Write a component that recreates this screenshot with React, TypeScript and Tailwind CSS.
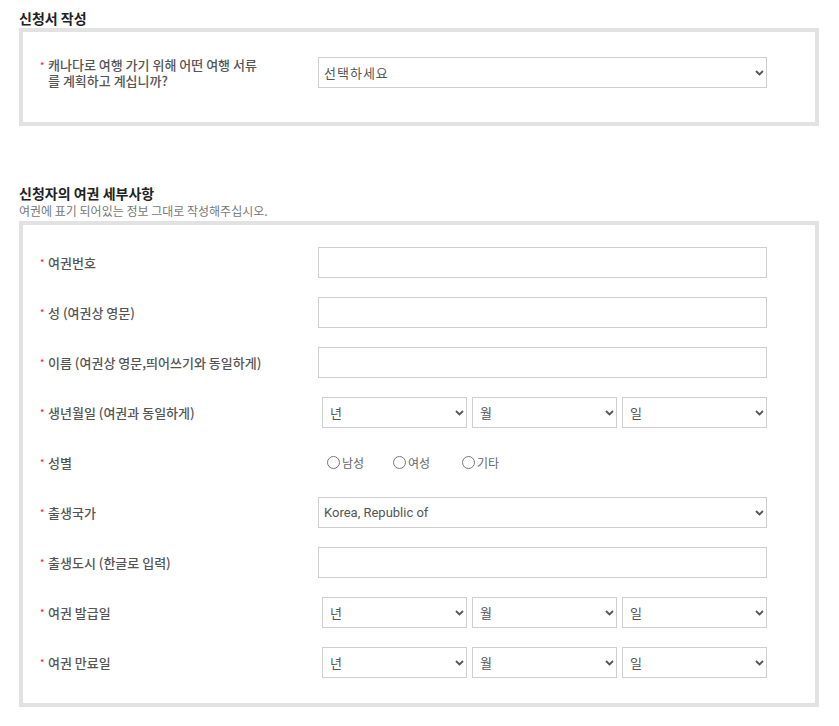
import React from "react";

const Chevron = () => (
  <svg width="9" height="6" viewBox="0 0 9 6" className="shrink-0">
    <path d="M1 1 L4.5 4.5 L8 1" fill="none" stroke="#555" strokeWidth="1.8" />
  </svg>
);

const Select = ({ text, className = "", pl = "pl-[5px]" }: { text: string; className?: string; pl?: string }) => (
  <div
    className={`h-[31px] border border-[#cfcfcf] bg-white flex items-center justify-between ${pl} pr-[2px] text-[13px] text-[#555] ${className}`}
  >
    <span>{text}</span>
    <Chevron />
  </div>
);

const Input = () => <div className="h-[31px] w-[449px] border border-[#cfcfcf] bg-white" />;

const Label = ({ children }: { children: React.ReactNode }) => (
  <div className="w-[295px] shrink-0 pl-[17px] flex items-center text-[13px] leading-[16px] text-[#555] font-medium">
    <span className="w-[8px] shrink-0 text-[#ff2a2a] text-[9px] self-start mt-[1px]">*</span>
    <span>{children}</span>
  </div>
);

const Row = ({ label, children }: { label: React.ReactNode; children: React.ReactNode }) => (
  <div className="flex items-center h-[31px]">
    <Label>{label}</Label>
    <div className="w-[449px] flex items-center">{children}</div>
  </div>
);

const DateSelects = () => (
  <div className="flex gap-[5px] ml-[4px]">
    <Select text="년" className="w-[145px]" pl="pl-[7px]" />
    <Select text="월" className="w-[145px]" pl="pl-[7px]" />
    <Select text="일" className="w-[145px]" pl="pl-[7px]" />
  </div>
);

const Radio = ({ text, className = "" }: { text: string; className?: string }) => (
  <div className={`flex items-center ${className}`}>
    <span className="w-[13px] h-[13px] rounded-full border border-[#777] bg-white" />
    <span className="ml-[2px] text-[12px] text-[#666]">{text}</span>
  </div>
);

export default function App() {
  return (
    <div className="w-[839px] min-h-[726px] bg-white pl-[19px] pt-[9px] font-['Noto_Sans_CJK_KR','Noto_Sans',sans-serif]">
      <div className="text-[14px] leading-[19px] font-bold text-[#222]">신청서 작성</div>
      <div className="w-[800px] border-4 border-[#e2e2e2] pt-[25px] pb-[34px]">
        <div className="flex items-center h-[31px]">
          <Label>
            캐나다로 여행 가기 위해 어떤 여행 서류
            <br />를 계획하고 계십니까?
          </Label>
          <Select text="선택하세요" className="w-[449px] tracking-[1px]" />
        </div>
      </div>

      <div className="mt-[58px] text-[14px] leading-[19px] font-bold text-[#222]">신청자의 여권 세부사항</div>
      <div className="text-[12px] leading-[16px] text-[#777]">여권에 표기 되어있는 정보 그대로 작성해주십시오.</div>
      <div className="mt-[2px] w-[800px] border-4 border-[#e2e2e2] pt-[22px] pb-[25px] flex flex-col gap-[19px]">
        <Row label="여권번호">
          <Input />
        </Row>
        <Row label="성 (여권상 영문)">
          <Input />
        </Row>
        <Row label="이름 (여권상 영문,띄어쓰기와 동일하게)">
          <Input />
        </Row>
        <Row label="생년월일 (여권과 동일하게)">
          <DateSelects />
        </Row>
        <Row label="성별">
          <div className="flex items-center pl-[9px]">
            <Radio text="남성" className="w-[66px]" />
            <Radio text="여성" className="w-[69px]" />
            <Radio text="기타" />
          </div>
        </Row>
        <Row label="출생국가">
          <Select text="Korea, Republic of" className="w-[449px] font-['Roboto','Liberation_Sans',sans-serif]" />
        </Row>
        <Row label="출생도시 (한글로 입력)">
          <Input />
        </Row>
        <Row label="여권 발급일">
          <DateSelects />
        </Row>
        <Row label="여권 만료일">
          <DateSelects />
        </Row>
      </div>
    </div>
  );
}
